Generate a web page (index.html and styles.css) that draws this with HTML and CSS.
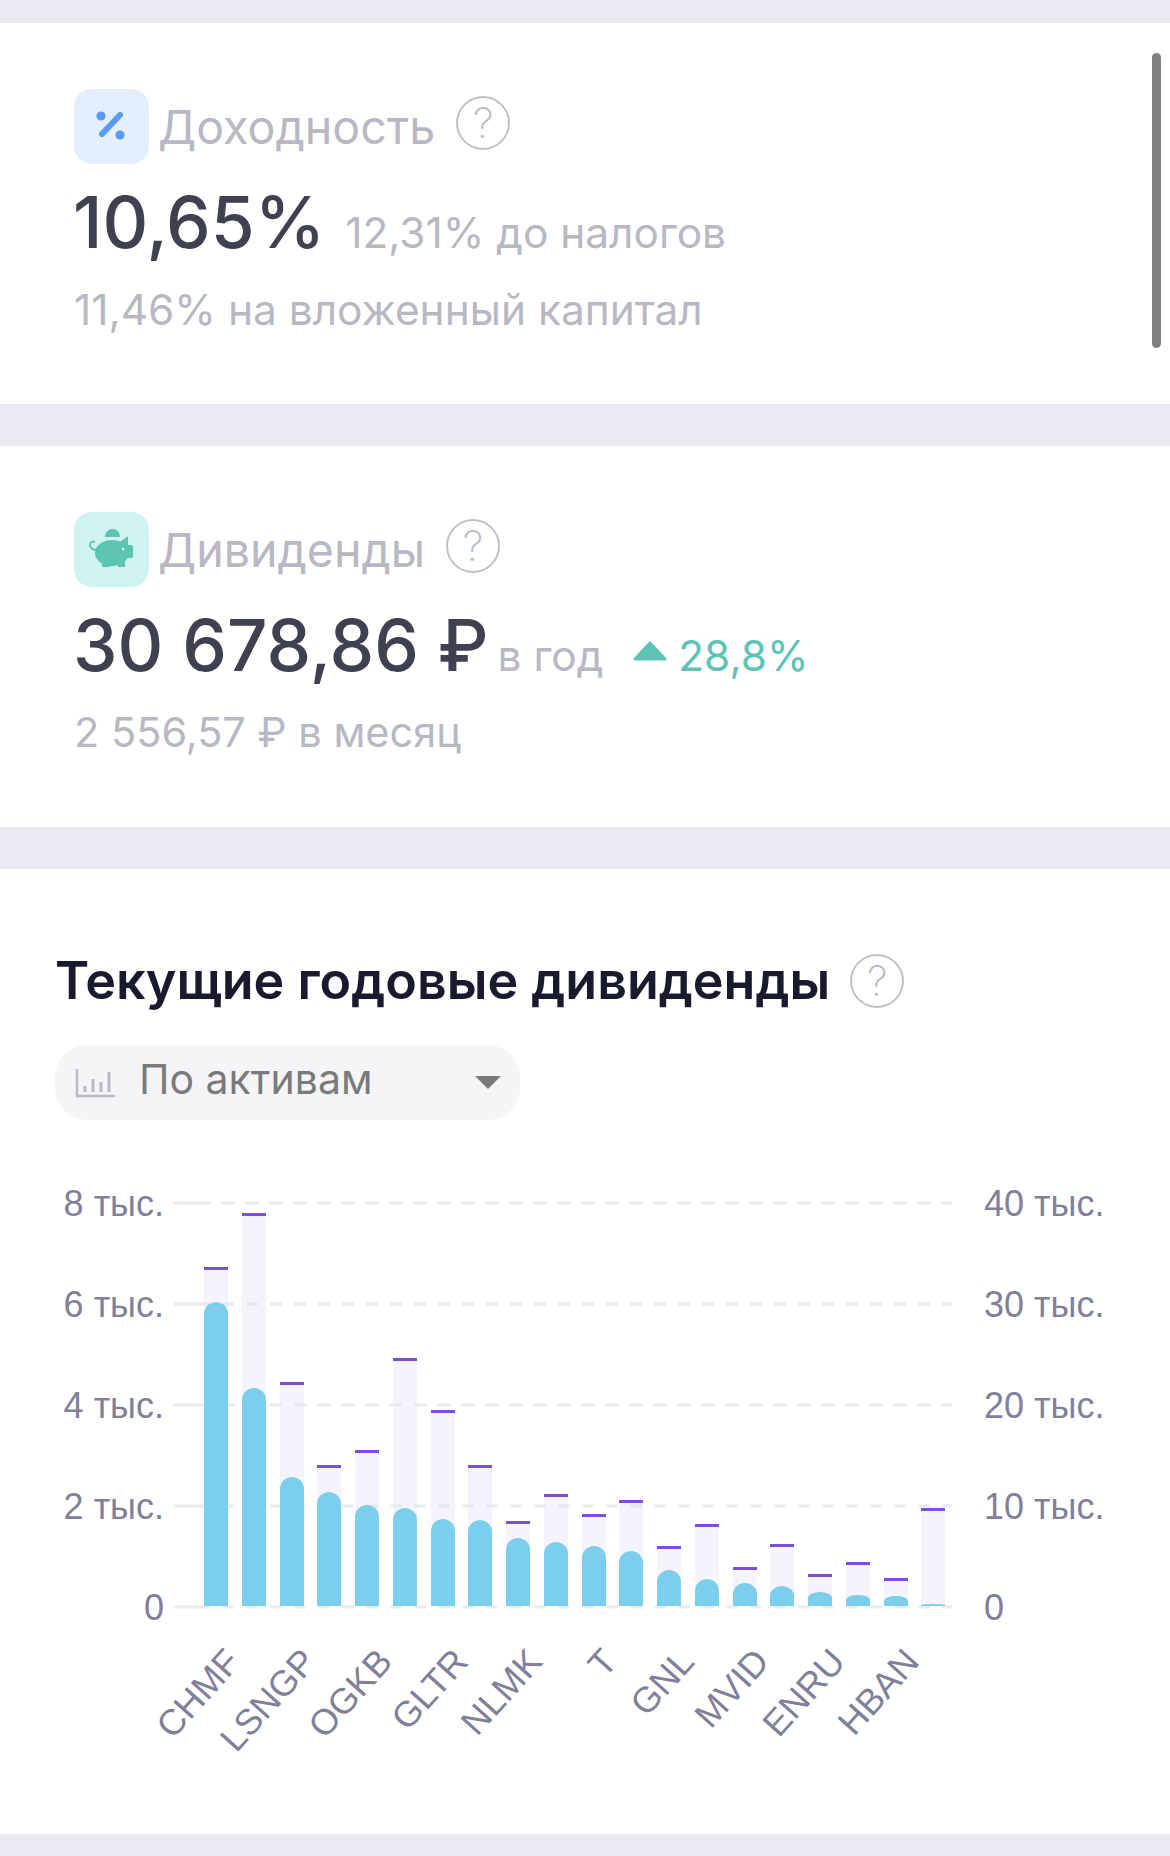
FILE: index.html
```html
<!DOCTYPE html>
<html lang="ru">
<head>
    <meta charset="UTF-8">
    <meta name="viewport" content="width=device-width, initial-scale=1.0">
    <title>Дивиденды</title>
    <link rel="stylesheet" href="styles.css">
</head>
<body>
    <div class="scrollbar"></div>

    <div class="card">
        <div class="stat-head">
            <div class="stat-icon stat-icon-blue">
                <svg width="75" height="75" viewBox="0 0 75 75">
                    <circle cx="27" cy="27" r="4.6" fill="#5a9cf5"/>
                    <circle cx="46" cy="46" r="4.6" fill="#5a9cf5"/>
                    <line x1="46" y1="26" x2="28" y2="45" stroke="#5a9cf5" stroke-width="6" stroke-linecap="round"/>
                </svg>
            </div>
            <span class="stat-name">Доходность</span>
            <span class="hint">?</span>
        </div>
        <div class="stat-value">
            <span>10,65%</span>
            <span class="stat-note">12,31% до налогов</span>
        </div>
        <div class="stat-sub">11,46% на вложенный капитал</div>
    </div>

    <div class="card">
        <div class="stat-head">
            <div class="stat-icon stat-icon-green">
                <svg width="75" height="75" viewBox="0 0 75 75" fill="#5dc4b2">
                    <path d="M31 25a7.5 8 0 0 1 15 0z"/>
                    <ellipse cx="38" cy="41" rx="17" ry="13"/>
                    <path d="M46 30l8-6v12z"/>
                    <rect x="50" y="33" width="9" height="13" rx="2"/>
                    <rect x="28" y="47" width="8" height="8"/>
                    <rect x="44" y="47" width="7" height="8"/>
                    <path d="M23 38c-4 0-7-2-7-5s3-4 4-3" fill="none" stroke="#5dc4b2" stroke-width="2" stroke-linecap="round"/>
                    <circle cx="49" cy="37" r="1.2" fill="#fff"/>
                </svg>
            </div>
            <span class="stat-name">Дивиденды</span>
            <span class="hint">?</span>
        </div>
        <div class="stat-value">
            <span>30 678,86 ₽</span>
            <span class="stat-note stat-note-tight">в год</span>
            <span class="trend">
                <svg class="trend-arrow" width="34" height="20" viewBox="0 0 34 20">
                    <path d="M17 2L32 18H2z" fill="#5cc4b5" stroke="#5cc4b5" stroke-width="3" stroke-linejoin="round"/>
                </svg>28,8%</span>
        </div>
        <div class="stat-sub stat-sub-small">2 556,57 ₽ в месяц</div>
    </div>

    <div class="card card-chart">
        <div class="chart-head">
            <h2>Текущие годовые дивиденды</h2>
            <span class="hint">?</span>
        </div>
        <div class="select">
            <svg width="40" height="32" viewBox="0 0 40 32" fill="none" stroke="#b9b9c6">
                <path d="M2 2v27h38" stroke-width="2.4"/>
                <path d="M10 19v6M18 12v13M26 15v10M34 5v20" stroke-width="3"/>
            </svg>
            <span class="select-label">По активам</span>
            <span class="select-arrow"></span>
        </div>

        <svg class="chart" width="1170" height="620" viewBox="0 1180 1170 620">
            <!-- фон столбцов -->
            <g fill="#f5f3fc">
                <rect x="204" y="1268" width="24" height="338"/>
                <rect x="242" y="1214" width="24" height="392"/>
                <rect x="280" y="1383" width="24" height="223"/>
                <rect x="317" y="1466" width="24" height="140"/>
                <rect x="355" y="1451" width="24" height="155"/>
                <rect x="393" y="1359" width="24" height="247"/>
                <rect x="431" y="1411" width="24" height="195"/>
                <rect x="468" y="1466" width="24" height="140"/>
                <rect x="506" y="1522" width="24" height="84"/>
                <rect x="544" y="1495" width="24" height="111"/>
                <rect x="582" y="1515" width="24" height="91"/>
                <rect x="619" y="1501" width="24" height="105"/>
                <rect x="657" y="1547" width="24" height="59"/>
                <rect x="695" y="1525" width="24" height="81"/>
                <rect x="733" y="1568" width="24" height="38"/>
                <rect x="770" y="1545" width="24" height="61"/>
                <rect x="808" y="1575" width="24" height="31"/>
                <rect x="846" y="1563" width="24" height="43"/>
                <rect x="884" y="1579" width="24" height="27"/>
                <rect x="921" y="1509" width="24" height="97"/>
            </g>

            <!-- сетка -->
            <g stroke="#e6e6ee" stroke-width="3" opacity="0.8">
                <path d="M174 1203h36M174 1304h36M174 1405h36M174 1506h36M174 1607h36"/>
                <path d="M222 1203H952M222 1304H952M222 1405H952M222 1506H952M222 1607H952" stroke-dasharray="12 12"/>
            </g>

            <!-- столбцы -->
            <g fill="#7bcfed">
                <path d="M204 1606v-292a12 12 0 0 1 24 0v292z"/>
                <path d="M242 1606v-206a12 12 0 0 1 24 0v206z"/>
                <path d="M280 1606v-117a12 12 0 0 1 24 0v117z"/>
                <path d="M317 1606v-102a12 12 0 0 1 24 0v102z"/>
                <path d="M355 1606v-89a12 12 0 0 1 24 0v89z"/>
                <path d="M393 1606v-86a12 12 0 0 1 24 0v86z"/>
                <path d="M431 1606v-75a12 12 0 0 1 24 0v75z"/>
                <path d="M468 1606v-74a12 12 0 0 1 24 0v74z"/>
                <path d="M506 1606v-56a12 12 0 0 1 24 0v56z"/>
                <path d="M544 1606v-52a12 12 0 0 1 24 0v52z"/>
                <path d="M582 1606v-48a12 12 0 0 1 24 0v48z"/>
                <path d="M619 1606v-43a12 12 0 0 1 24 0v43z"/>
                <path d="M657 1606v-24a12 12 0 0 1 24 0v24z"/>
                <path d="M695 1606v-15a12 12 0 0 1 24 0v15z"/>
                <path d="M733 1606v-12a12 11 0 0 1 24 0v12z"/>
                <path d="M770 1606v-10a12 10 0 0 1 24 0v10z"/>
                <path d="M808 1606v-8a12 6 0 0 1 24 0v8z"/>
                <path d="M846 1606v-6a12 5 0 0 1 24 0v6z"/>
                <path d="M884 1606v-5a12 5 0 0 1 24 0v5z"/>
                <path d="M921 1606v-1a12 1 0 0 1 24 0v1z"/>
            </g>

            <!-- план -->
            <g fill="#7b4fd6">
                <rect x="204" y="1267" width="24" height="3"/>
                <rect x="242" y="1213" width="24" height="3"/>
                <rect x="280" y="1382" width="24" height="3"/>
                <rect x="317" y="1465" width="24" height="3"/>
                <rect x="355" y="1450" width="24" height="3"/>
                <rect x="393" y="1358" width="24" height="3"/>
                <rect x="431" y="1410" width="24" height="3"/>
                <rect x="468" y="1465" width="24" height="3"/>
                <rect x="506" y="1521" width="24" height="3"/>
                <rect x="544" y="1494" width="24" height="3"/>
                <rect x="582" y="1514" width="24" height="3"/>
                <rect x="619" y="1500" width="24" height="3"/>
                <rect x="657" y="1546" width="24" height="3"/>
                <rect x="695" y="1524" width="24" height="3"/>
                <rect x="733" y="1567" width="24" height="3"/>
                <rect x="770" y="1544" width="24" height="3"/>
                <rect x="808" y="1574" width="24" height="3"/>
                <rect x="846" y="1562" width="24" height="3"/>
                <rect x="884" y="1578" width="24" height="3"/>
                <rect x="921" y="1508" width="24" height="3"/>
            </g>

            <g class="axis axis-left">
                <text x="164" y="1216">8 тыс.</text>
                <text x="164" y="1317">6 тыс.</text>
                <text x="164" y="1418">4 тыс.</text>
                <text x="164" y="1519">2 тыс.</text>
                <text x="164" y="1620">0</text>
            </g>
            <g class="axis">
                <text x="984" y="1216">40 тыс.</text>
                <text x="984" y="1317">30 тыс.</text>
                <text x="984" y="1418">20 тыс.</text>
                <text x="984" y="1519">10 тыс.</text>
                <text x="984" y="1620">0</text>
            </g>

            <g class="ticks">
                <text transform="translate(242 1663) rotate(-48)">CHMF</text>
                <text transform="translate(318 1663) rotate(-48)">LSNGP</text>
                <text transform="translate(394 1663) rotate(-48)">OGKB</text>
                <text transform="translate(470 1663) rotate(-48)">GLTR</text>
                <text transform="translate(544 1663) rotate(-48)">NLMK</text>
                <text transform="translate(619 1663) rotate(-48)">T</text>
                <text transform="translate(696 1663) rotate(-48)">GNL</text>
                <text transform="translate(771 1663) rotate(-48)">MVID</text>
                <text transform="translate(847 1663) rotate(-48)">ENRU</text>
                <text transform="translate(921 1663) rotate(-48)">HBAN</text>
            </g>
        </svg>
    </div>
</body>
</html>
```

FILE: styles.css
```css
body {
    font-family: Inter, 'Noto Sans', sans-serif;
    margin: 0;
    padding: 23px 0 22px;
    background-color: #e9eaf2;
    color: #3f4050;
}
.scrollbar {
    position: absolute;
    top: 53px;
    left: 1152px;
    width: 9px;
    height: 295px;
    border-radius: 5px;
    background-color: #808080;
}
.card {
    height: 315px;
    padding: 66px 0 0 74px;
    margin-bottom: 42px;
    background-color: white;
}
.stat-head {
    display: flex;
    align-items: center;
    height: 75px;
}
.stat-icon {
    width: 75px;
    height: 75px;
    border-radius: 18px;
    margin-right: 9px;
}
.stat-icon-blue {
    background-color: #e3effd;
}
.stat-icon-green {
    background-color: #cff4f0;
}
.stat-name {
    font-size: 46.6px;
    color: #b8b8c4;
    margin-right: 21px;
}
.hint {
    display: block;
    width: 50px;
    height: 50px;
    line-height: 50px;
    border: 2px solid #c0c0c8;
    border-radius: 50%;
    text-align: center;
    font-size: 42px;
    font-weight: 200;
    color: #b8b8c4;
}
.stat-head .hint {
    margin-top: -7px;
}
.stat-value {
    display: flex;
    align-items: baseline;
    font-size: 71px;
    font-weight: 500;
    line-height: 86px;
    margin: 15px 0 0 -1px;
    white-space: nowrap;
}
.stat-note {
    font-size: 42.4px;
    font-weight: 400;
    color: #b8b8c4;
    margin-left: 20px;
}
.stat-note-tight {
    margin-left: 9px;
}
.trend {
    font-size: 42.4px;
    font-weight: 400;
    color: #5cc4b5;
    margin-left: 30px;
}
.trend-arrow {
    margin-right: 11px;
    vertical-align: 10px;
}
.stat-sub {
    font-size: 42.4px;
    color: #b8b8c4;
    margin-top: 8px;
}
.stat-sub-small {
    font-size: 41.5px;
}
.card-chart {
    height: 965px;
    padding: 0;
    margin-bottom: 0;
}
.chart-head {
    display: flex;
    align-items: center;
    padding: 82px 0 0 55px;
}
.chart-head h2 {
    margin: 0 20px 0 0;
    font-size: 52px;
    font-weight: 600;
    line-height: 60px;
    color: #191a2e;
}
.select {
    display: flex;
    align-items: center;
    box-sizing: border-box;
    width: 465px;
    height: 75px;
    margin: 34px 0 0 55px;
    padding: 0 19px 0 20px;
    border-radius: 32px;
    background-color: #f5f5f7;
}
.select-label {
    flex-grow: 1;
    font-size: 41px;
    color: #7a7a7a;
    margin: -8px 0 0 24px;
}
.select-arrow {
    width: 0;
    height: 0;
    border-left: 13px solid transparent;
    border-right: 13px solid transparent;
    border-top: 13px solid #7a7a7a;
}
.chart {
    display: block;
    margin-top: 60px;
}
.axis text {
    font-family: 'Liberation Sans', Arial, sans-serif;
    font-size: 36px;
    fill: #80809a;
}
.axis-left text {
    text-anchor: end;
}
.ticks text {
    font-family: 'Liberation Sans', Arial, sans-serif;
    font-size: 36px;
    fill: #80809a;
    text-anchor: end;
}
```
